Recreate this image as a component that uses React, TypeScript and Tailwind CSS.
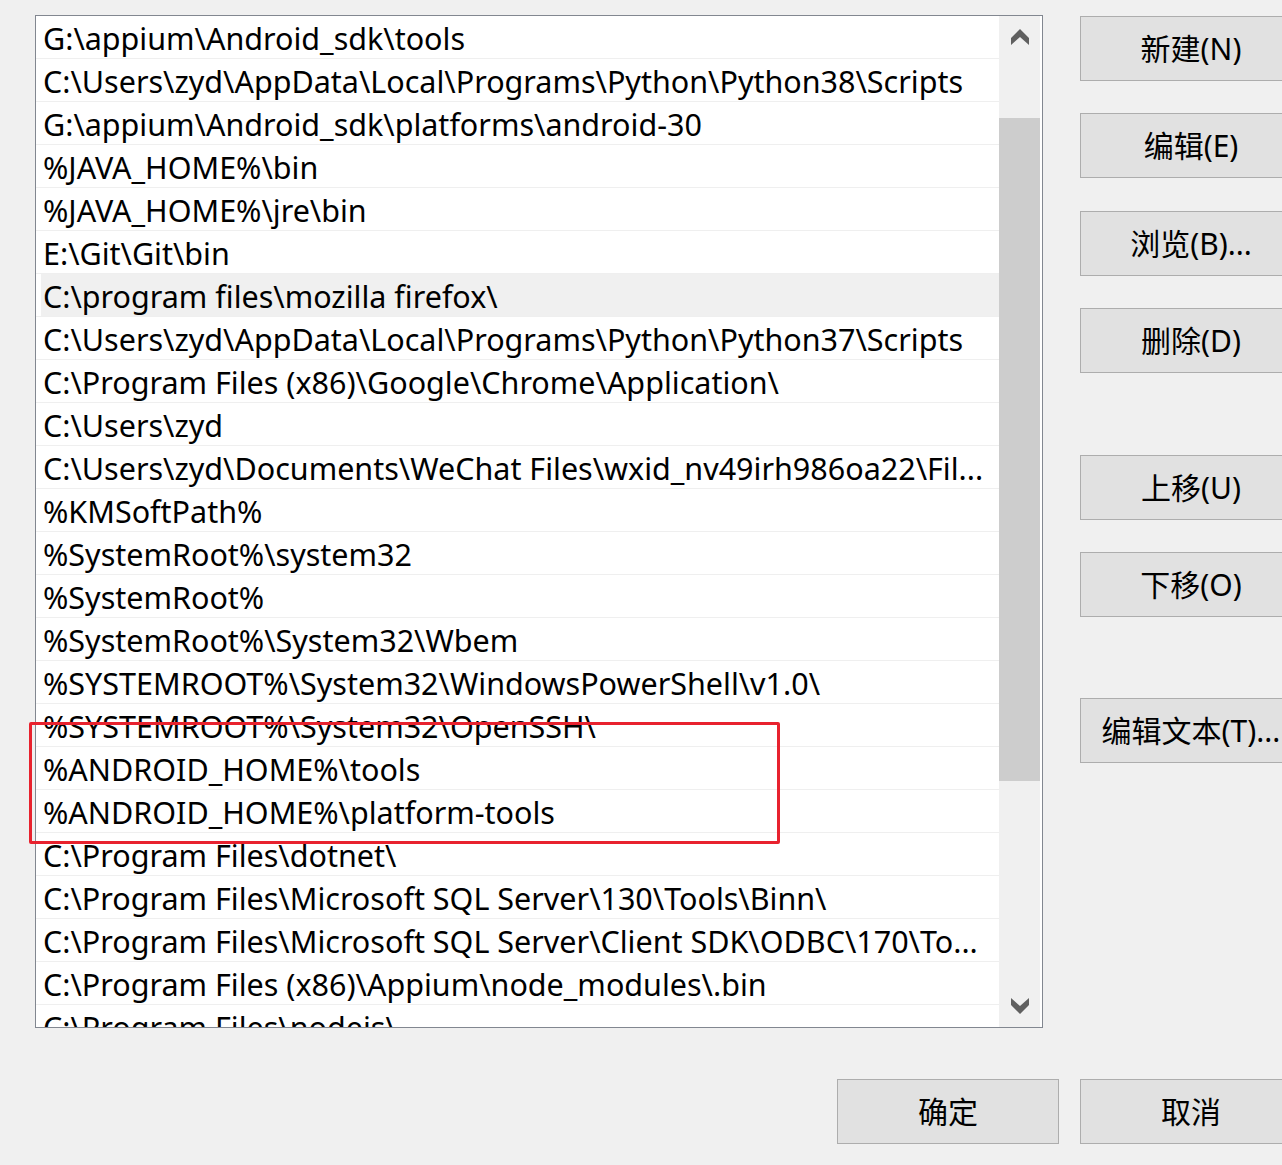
const paths = [
  "G:\\appium\\Android_sdk\\tools",
  "C:\\Users\\zyd\\AppData\\Local\\Programs\\Python\\Python38\\Scripts",
  "G:\\appium\\Android_sdk\\platforms\\android-30",
  "%JAVA_HOME%\\bin",
  "%JAVA_HOME%\\jre\\bin",
  "E:\\Git\\Git\\bin",
  "C:\\program files\\mozilla firefox\\",
  "C:\\Users\\zyd\\AppData\\Local\\Programs\\Python\\Python37\\Scripts",
  "C:\\Program Files (x86)\\Google\\Chrome\\Application\\",
  "C:\\Users\\zyd",
  "C:\\Users\\zyd\\Documents\\WeChat Files\\wxid_nv49irh986oa22\\Fil...",
  "%KMSoftPath%",
  "%SystemRoot%\\system32",
  "%SystemRoot%",
  "%SystemRoot%\\System32\\Wbem",
  "%SYSTEMROOT%\\System32\\WindowsPowerShell\\v1.0\\",
  "%SYSTEMROOT%\\System32\\OpenSSH\\",
  "%ANDROID_HOME%\\tools",
  "%ANDROID_HOME%\\platform-tools",
  "C:\\Program Files\\dotnet\\",
  "C:\\Program Files\\Microsoft SQL Server\\130\\Tools\\Binn\\",
  "C:\\Program Files\\Microsoft SQL Server\\Client SDK\\ODBC\\170\\To...",
  "C:\\Program Files (x86)\\Appium\\node_modules\\.bin",
  "C:\\Program Files\\nodejs\\",
];

const HIGHLIGHT = 6;

const sideButtons = [
  { label: "新建(N)", mt: "mt-[1px]" },
  { label: "编辑(E)", mt: "mt-[32px]" },
  { label: "浏览(B)...", mt: "mt-[33px]" },
  { label: "删除(D)", mt: "mt-[32px]" },
  { label: "上移(U)", mt: "mt-[82px]" },
  { label: "下移(O)", mt: "mt-[32px]" },
  { label: "编辑文本(T)...", mt: "mt-[81px]" },
];

const Button = ({ label, className = "" }: { label: string; className?: string }) => (
  <button
    className={
      "w-[222px] h-[65px] shrink-0 bg-[#e1e1e1] border border-[#adadad] text-[30px] text-black flex items-center justify-center whitespace-nowrap " +
      className
    }
  >
    {label}
  </button>
);

const Chevron = ({ down }: { down?: boolean }) => (
  <svg width="18" height="16" viewBox="0 0 18 16" className={down ? "rotate-180" : ""}>
    <polygon points="9,0 18,9 18,16 9,8 0,16 0,9" fill="#606060" />
  </svg>
);

export default function App() {
  return (
    <div
      className="relative w-[1282px] h-[1165px] overflow-hidden bg-[#f0f0f0] text-black"
      style={{ fontFamily: '"Noto Sans", "Noto Sans CJK SC", sans-serif' }}
    >
      <div className="flex pt-[15px] pl-[35px]">
        {/* path list */}
        <div className="w-[1008px] h-[1013px] shrink-0 border border-[#828790] bg-white flex pr-[2px]">
          <div className="w-[963px] overflow-hidden">
            {paths.map((p, i) => (
              <div key={i} className="h-[43px] border-b border-[#efefef] flex">
                <div
                  className={
                    "flex-1 pt-[2px] whitespace-nowrap text-[30.5px] leading-[40px] " +
                    (i === HIGHLIGHT ? "ml-[5px] pl-[2px] bg-[#f0f0f0]" : "pl-[7px]")
                  }
                >
                  {p}
                </div>
              </div>
            ))}
          </div>
          {/* scrollbar */}
          <div className="w-[41px] bg-[#f0f0f0] flex flex-col">
            <div className="h-[42px] flex items-center justify-center">
              <Chevron />
            </div>
            <div className="h-[60px]" />
            <div className="h-[663px] bg-[#cdcdcd]" />
            <div className="flex-1" />
            <div className="h-[42px] flex items-center justify-center">
              <Chevron down />
            </div>
          </div>
        </div>

        {/* action buttons */}
        <div className="ml-[37px] flex flex-col">
          {sideButtons.map((b) => (
            <Button key={b.label} label={b.label} className={b.mt} />
          ))}
        </div>
      </div>

      <div className="flex gap-[21px] ml-[837px] mt-[51px]">
        <Button label="确定" />
        <Button label="取消" />
      </div>

      {/* red annotation box */}
      <div className="absolute left-[29px] top-[722px] w-[751px] h-[122px] border-[3px] border-[#e8222e] rounded-[2px]" />
    </div>
  );
}
